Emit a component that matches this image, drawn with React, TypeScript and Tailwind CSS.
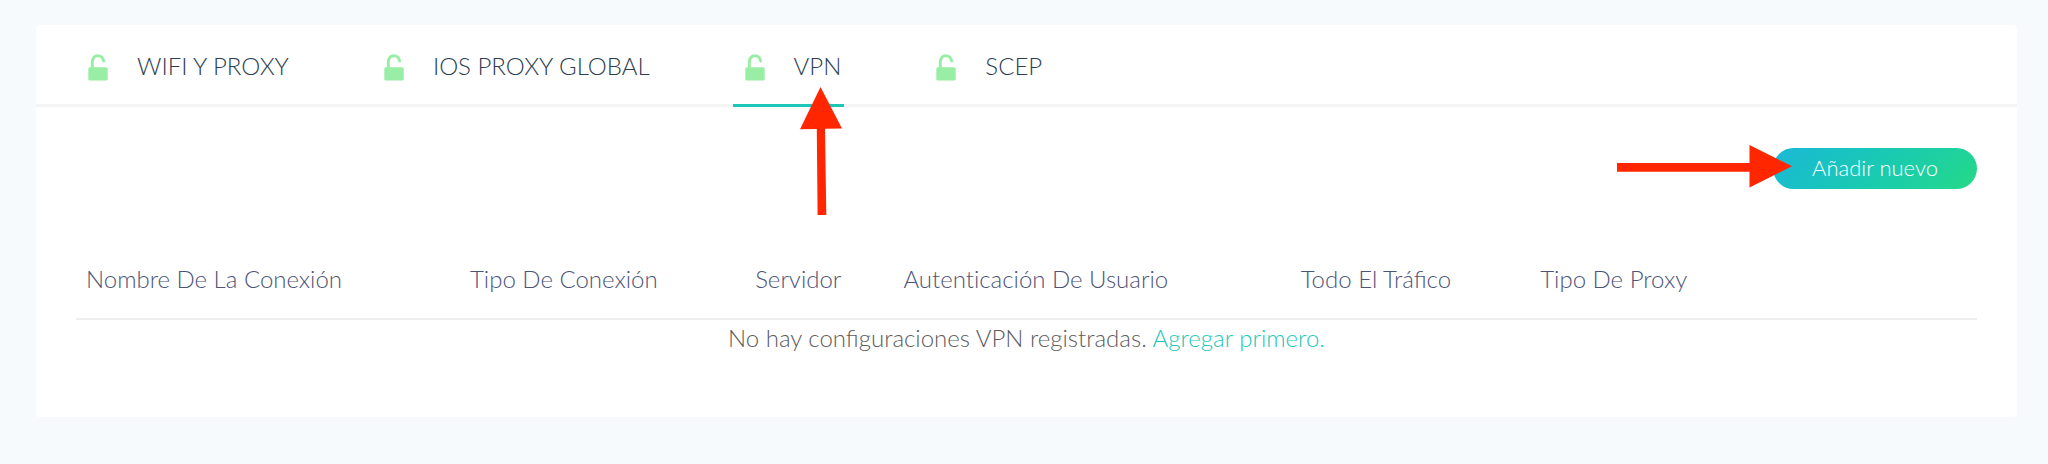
import clsx from "clsx";

const tabs = ["WIFI Y PROXY", "IOS PROXY GLOBAL", "VPN", "SCEP"];
const activeTab = "VPN";

const columns = [
  { title: "Nombre De La Conexión", className: "w-[20.2%]" },
  { title: "Tipo De Conexión", className: "w-[15%]" },
  { title: "Servidor", className: "w-[7.8%]" },
  { title: "Autenticación De Usuario", className: "w-[20.9%] [font-variant-ligatures:none]" },
  { title: "Todo El Tráfico", className: "w-[12.6%]" },
  { title: "Tipo De Proxy", className: "" },
];

function UnlockIcon() {
  return (
    <svg viewBox="0 0 20 27" className="mt-1 h-[27px] w-5 shrink-0" aria-hidden="true">
      <path
        d="M4.3 14V8C4.3 4.2 6.5 1.8 9.9 1.8c3.2 0 5.5 2.1 5.7 5.2"
        fill="none"
        stroke="#98eea4"
        strokeWidth="3"
        strokeLinecap="round"
      />
      <rect x="0.3" y="13.3" width="19.4" height="13.2" rx="1.6" fill="#98eea4" />
    </svg>
  );
}

function ArrowUp() {
  return (
    <svg
      viewBox="0 0 42 129"
      className="pointer-events-none absolute top-[62px] right-[2px] z-10 h-[129px] w-[42px]"
      aria-hidden="true"
    >
      <path d="M20.5 0 42 41.5 25 41.8 26.3 128H17.6L16.8 42 0 42.3Z" fill="#ff2600" />
    </svg>
  );
}

function ArrowRight() {
  return (
    <svg
      viewBox="0 0 175 43"
      className="pointer-events-none absolute -top-[3px] right-[185px] h-[43px] w-[175px]"
      aria-hidden="true"
    >
      <path d="M0 18H132.5V0L175 21.3 132.5 42.5V26.7H0Z" fill="#ff2600" />
    </svg>
  );
}

export default function App() {
  return (
    <div className="min-h-screen bg-[#f6fafd] py-[25px] pr-[31px] pl-9 font-['Lato',sans-serif] text-2xl font-light">
      <main className="rounded-sm bg-white pb-[62px]">
        <nav className="flex gap-20 border-b-3 border-[#f4f4f4] pl-10" role="tablist">
          {tabs.map((tab) => (
            <button
              key={tab}
              type="button"
              role="tab"
              aria-selected={tab === activeTab}
              className={clsx(
                "relative -mb-[3px] flex h-[82px] items-center gap-[29px] border-b-3 pt-[2px] pr-[3px] pl-3 text-[#2c3e50]",
                tab === activeTab ? "border-[#1dc7b7]" : "border-transparent"
              )}
            >
              <UnlockIcon />
              {tab}
              {tab === activeTab && <ArrowUp />}
            </button>
          ))}
        </nav>

        <div className="px-10 pt-[41px]">
          <div className="flex justify-end">
            <div className="relative">
              <button
                type="button"
                className="block h-[41px] w-[204px] rounded-full bg-linear-135 from-[#1cb8d6] to-[#25d987] pb-[2px] text-[22px] text-white"
              >
                Añadir nuevo
              </button>
              <ArrowRight />
            </div>
          </div>

          <table className="mt-[51px] w-full table-fixed">
            <thead>
              <tr className="h-[79px] border-b-2 border-[#eeeeee] text-left text-[#4c5478]">
                {columns.map((col) => (
                  <th key={col.title} className={clsx("px-[10px] font-light whitespace-nowrap", col.className)}>
                    {col.title}
                  </th>
                ))}
              </tr>
            </thead>
            <tbody>
              <tr>
                <td colSpan={6} className="h-9 text-center text-[#5c5c5c]">
                  No hay configuraciones VPN registradas.{" "}
                  <a href="#" className="text-[#1dc7b7]">
                    Agregar primero.
                  </a>
                </td>
              </tr>
            </tbody>
          </table>
        </div>
      </main>
    </div>
  );
}
